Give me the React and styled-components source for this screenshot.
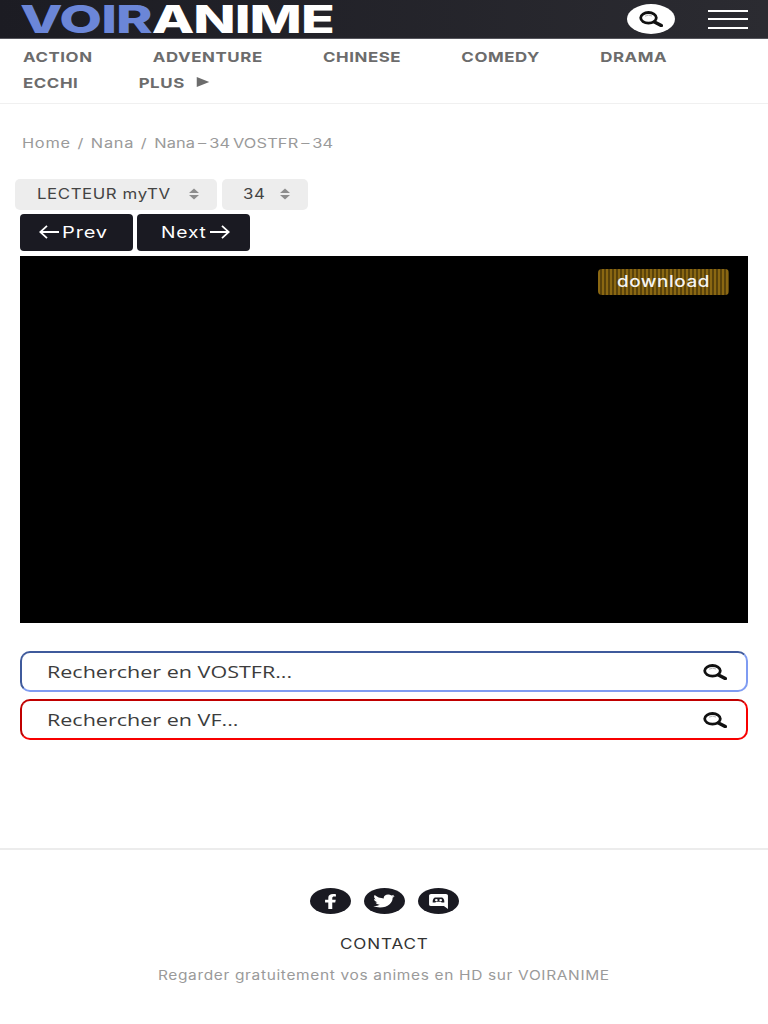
import React from "react";
import styled, { createGlobalStyle } from "styled-components";
import { FaFacebookF, FaTwitter } from "react-icons/fa";

const GlobalStyle = createGlobalStyle`
  html, body {
    margin: 0;
    padding: 0;
    background: #fff;
    font-family: Inter, "Liberation Sans", sans-serif;
  }
  * {
    box-sizing: border-box;
  }
`;

const Page = styled.div`
  width: 768px;
  height: 1024px;
  overflow: hidden;
`;

// the reference is stretched sideways, so text gets widened without touching the flow
const Wide = styled.span`
  display: inline-block;
  white-space: nowrap;
  transform: scaleX(${props => props.$x});
  transform-origin: ${props => props.$origin || "left"} center;
`;

const NextLabel = styled(Wide)`
  width: 46px;
`;

const Header = styled.header`
  height: 39px;
  padding: 0 20px;
  display: flex;
  align-items: center;
  background: linear-gradient(90deg, #1c1c23, #2b2b31);
  border-bottom: 1px solid #55555c;
`;

const Logo = styled.a`
  flex: 1;
  font-weight: 800;
  font-size: 33px;
  line-height: 38px;
  letter-spacing: -0.6px;
  white-space: nowrap;
  color: #fff;
  transform: scale(1.68, 1.18);
  transform-origin: left center;
`;

const LogoAccent = styled.span`
  color: #6b86d8;
`;

const HeaderSearch = styled.button`
  width: 48px;
  height: 30px;
  margin-right: 33px;
  padding: 0;
  border: 0;
  border-radius: 50%;
  background: #fff;
  display: flex;
  align-items: center;
  justify-content: center;
`;

const Burger = styled.div`
  width: 40px;
  display: flex;
  flex-direction: column;
  gap: 6.5px;
`;

const BurgerLine = styled.span`
  height: 2px;
  background: #fff;
`;

const Nav = styled.nav`
  height: 65px;
  padding: 5px 23px 0;
  border-bottom: 1px solid #f0f0f0;
`;

const NavRow = styled.div`
  width: 578px;
  display: flex;
  flex-wrap: wrap;
  align-content: flex-start;
  column-gap: 48.2px;
  transform: scaleX(1.25);
  transform-origin: left top;
`;

const NavItem = styled.a`
  height: 26px;
  display: flex;
  align-items: center;
  gap: 9.5px;
  font-size: 13.5px;
  font-weight: 700;
  letter-spacing: 0.45px;
  color: #6c6c6c;
`;

const Triangle = styled.span`
  width: 0;
  height: 0;
  border-left: 10px solid #6c6c6c;
  border-top: 5px solid transparent;
  border-bottom: 5px solid transparent;
  margin-top: -2px;
`;

const Crumbs = styled.div`
  margin-top: 30px;
  padding-left: 22px;
  height: 18px;
  display: flex;
  align-items: center;
  gap: 5.4px;
  font-size: 13px;
  letter-spacing: 0.55px;
  color: #9a9a9a;
  transform: scaleX(1.26);
  transform-origin: 22px center;
`;

const CrumbCurrent = styled.span`
  word-spacing: -1.5px;
  letter-spacing: 0.1px;
`;

const Selects = styled.div`
  margin-top: 27px;
  padding-left: 15px;
  display: flex;
  gap: 5px;
`;

const Select = styled.div`
  width: ${props => props.$width}px;
  height: 31px;
  padding: 0 17px 2px ${props => props.$indent}px;
  display: flex;
  align-items: center;
  justify-content: space-between;
  border-radius: 5px;
  background: #ededed;
  font-size: 14.5px;
  letter-spacing: 0.5px;
  color: #444;
`;

const Pager = styled.div`
  margin-top: 4px;
  padding-left: 20px;
  display: flex;
  gap: 4px;
`;

const PagerButton = styled.a`
  width: 113px;
  height: 37px;
  padding: 0 0 2px ${props => props.$indent}px;
  display: flex;
  align-items: center;
  gap: 3px;
  border-radius: 4px;
  background: #1a1a22;
  font-size: 16px;
  letter-spacing: 0.7px;
  color: #fff;
`;

const Player = styled.div`
  position: relative;
  height: 367px;
  margin: 5px 20px 0;
  background: #000;
`;

const Download = styled.a`
  position: absolute;
  top: 13px;
  right: 19px;
  width: 131px;
  height: 26px;
  padding-bottom: 2px;
  display: flex;
  align-items: center;
  justify-content: center;
  border-radius: 4px;
  background: repeating-linear-gradient(90deg, #8a6712 0 2px, #59420a 2px 4px);
  font-size: 16px;
  font-weight: 500;
  letter-spacing: 0.5px;
  color: #f4f4f4;
`;

const Searches = styled.div`
  margin: 28px 20px 0;
  display: flex;
  flex-direction: column;
  gap: 7px;
`;

const SearchBox = styled.div`
  height: 41px;
  padding: 0 19px 0 25px;
  display: flex;
  align-items: center;
  border: 2px solid;
  border-radius: 10px;
  border-color: ${props => `${props.$dark} ${props.$light} ${props.$light} ${props.$dark}`};
  background: #fff;
`;

const SearchInput = styled.input`
  flex: 1;
  min-width: 0;
  border: 0;
  outline: 0;
  padding: 0;
  background: transparent;
  font-family: "Open Sans", sans-serif;
  font-size: 16px;
  color: #333;
  transform: scaleX(1.345);
  transform-origin: left center;

  &::placeholder {
    color: #3c3c3c;
    opacity: 1;
  }
`;

const Footer = styled.footer`
  margin-top: 108px;
  padding-top: 38px;
  display: flex;
  flex-direction: column;
  align-items: center;
  border-top: 2px solid #ececec;
`;

const Socials = styled.div`
  display: flex;
  gap: 13px;
`;

const Social = styled.a`
  width: 41px;
  height: 26px;
  display: flex;
  align-items: center;
  justify-content: center;
  border-radius: 50%;
  background: #1a1a22;
  color: #fff;

  svg {
    transform: scaleX(1.35);
  }
`;

const Contact = styled.a`
  margin-top: 21px;
  font-size: 14px;
  line-height: 18px;
  letter-spacing: 0.7px;
  color: #333;
`;

const Tagline = styled.p`
  margin: 13px 0 0;
  font-size: 13px;
  line-height: 18px;
  letter-spacing: 0.55px;
  color: #9a9a9a;
`;

const Glass = () => (
  <svg width="24" height="16" viewBox="0 0 24 16" fill="none">
    <ellipse cx="9.5" cy="6.8" rx="7.8" ry="5.3" stroke="#111" strokeWidth="2.8" />
    <path d="M15.5 11 L22.3 14.6" stroke="#111" strokeWidth="3.4" strokeLinecap="round" />
    <path d="M6 5.2 Q9.5 3.2 13 5" stroke="#b5b5b5" strokeWidth="1" />
  </svg>
);

const Stepper = () => (
  <svg width="12" height="12" viewBox="0 0 12 12" fill="#8d8d8d">
    <path d="M6 0.5 L11 5 H1 Z M1 7 H11 L6 11.5 Z" />
  </svg>
);

const Arrow = ({ flip }) => (
  <svg width="20" height="14" viewBox="0 0 20 14" fill="none" stroke="#fff" strokeWidth="1.8">
    <path d={flip ? "M20 7 H1 M8 0.8 L1.2 7 L8 13.2" : "M0 7 H19 M12 0.8 L18.8 7 L12 13.2"} />
  </svg>
);

const DiscordIcon = () => (
  <svg width="15" height="16" viewBox="0 0 15 16">
    <path d="M2 1 H13 Q14.5 1 14.5 2.5 V16 L11.5 13 H2 Q0.5 13 0.5 11.5 V2.5 Q0.5 1 2 1 Z" fill="#fff" />
    <path d="M3.2 9.6 Q3 6 4.8 4.6 H10.2 Q12 6 11.8 9.6 H9.8 L9.3 8.8 H5.7 L5.2 9.6 Z" fill="#1a1a22" />
    <ellipse cx="5.9" cy="7.2" rx="1" ry="1.1" fill="#fff" />
    <ellipse cx="9.1" cy="7.2" rx="1" ry="1.1" fill="#fff" />
  </svg>
);

const NAV_ITEMS = ["ACTION", "ADVENTURE", "CHINESE", "COMEDY", "DRAMA", "ECCHI"];

export default function App() {
  return (
    <Page>
      <GlobalStyle />
      <Header>
        <Logo>
          <LogoAccent>VOIR</LogoAccent>ANIME
        </Logo>
        <HeaderSearch>
          <Glass />
        </HeaderSearch>
        <Burger>
          <BurgerLine />
          <BurgerLine />
          <BurgerLine />
        </Burger>
      </Header>
      <Nav>
        <NavRow>
          {NAV_ITEMS.map(item => (
            <NavItem key={item}>{item}</NavItem>
          ))}
          <NavItem>
            PLUS
            <Triangle />
          </NavItem>
        </NavRow>
      </Nav>
      <Crumbs>
        <span>Home</span>
        <span>/</span>
        <span>Nana</span>
        <span>/</span>
        <CrumbCurrent>Nana – 34 VOSTFR – 34</CrumbCurrent>
      </Crumbs>
      <Selects>
        <Select $width={202} $indent={22}>
          <Wide $x={1.16}>LECTEUR myTV</Wide>
          <Stepper />
        </Select>
        <Select $width={86} $indent={21}>
          <Wide $x={1.16}>34</Wide>
          <Stepper />
        </Select>
      </Selects>
      <Pager>
        <PagerButton $indent={19}>
          <Arrow flip />
          <Wide $x={1.25}>Prev</Wide>
        </PagerButton>
        <PagerButton $indent={24}>
          <NextLabel $x={1.2}>Next</NextLabel>
          <Arrow />
        </PagerButton>
      </Pager>
      <Player>
        <Download>
          <Wide $x={1.18} $origin="center">
            download
          </Wide>
        </Download>
      </Player>
      <Searches>
        <SearchBox $dark="#3f5a9c" $light="#7f9cf2">
          <SearchInput placeholder="Rechercher en VOSTFR..." />
          <Glass />
        </SearchBox>
        <SearchBox $dark="#c00000" $light="#f80000">
          <SearchInput placeholder="Rechercher en VF..." />
          <Glass />
        </SearchBox>
      </Searches>
      <Footer>
        <Socials>
          <Social>
            <FaFacebookF size={15} />
          </Social>
          <Social>
            <FaTwitter size={16} />
          </Social>
          <Social>
            <DiscordIcon />
          </Social>
        </Socials>
        <Contact>
          <Wide $x={1.22} $origin="center">
            CONTACT
          </Wide>
        </Contact>
        <Tagline>
          <Wide $x={1.19} $origin="center">
            Regarder gratuitement vos animes en HD sur VOIRANIME
          </Wide>
        </Tagline>
      </Footer>
    </Page>
  );
}
